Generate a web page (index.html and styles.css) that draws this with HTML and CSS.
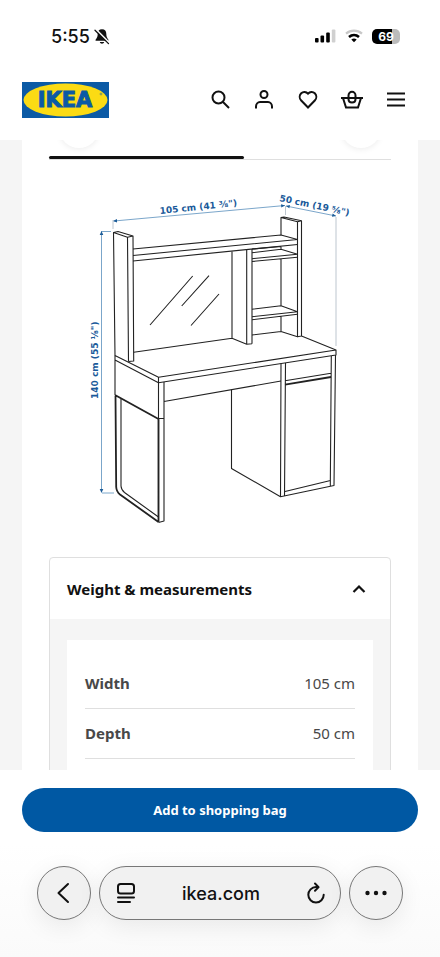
FILE: index.html
```html
<!DOCTYPE html>
<html lang="en">
<head>
    <meta charset="UTF-8">
    <meta name="viewport" content="width=device-width, initial-scale=1.0">
    <title>Desk - IKEA</title>
    <link rel="stylesheet" href="styles.css">
</head>
<body>
    <div class="status-bar">
        <div class="status-time">
            <span>5:55</span>
            <svg width="16" height="17" viewBox="0 0 16 17">
                <path d="M8 1.2c-3 0-4.3 2.100-4.300 4.600 0 3.400-1 4.300-2 5.600-.4.6-.2 1.400.6 1.400h11.400c.8 0 1-.8.6-1.400-1-1.300-2-2.200-2-5.600 0-2.500-1.300-4.600-4.300-4.600z" fill="#111"/>
                <path d="M5.800 14h4.400c-.3 1.100-1.100 1.700-2.200 1.700s-1.900-.6-2.200-1.700z" fill="#111"/>
                <path d="M2 1.400l13.500 13.500" stroke="#fff" stroke-width="1.500"/>
                <path d="M1 2.200l13.500 13.400" stroke="#111" stroke-width="1.300" stroke-linecap="round"/>
            </svg>
        </div>
        <div class="status-icons">
            <svg width="22" height="14" viewBox="0 0 22 14">
                <rect x="1" y="9" width="3.600" height="4.500" rx="1" fill="#000"/>
                <rect x="6.500" y="6.500" width="3.600" height="7" rx="1" fill="#000"/>
                <rect x="12.200" y="3.500" width="3.600" height="10" rx="1" fill="#000"/>
                <rect x="17.800" y="0.500" width="3.600" height="13" rx="1" fill="#d0d0d0"/>
            </svg>
            <svg width="18" height="14" viewBox="0 0 18 14" fill="none">
                <path d="M1 4.600c4.600-4 11.400-4 16 0" stroke="#c8c8c8" stroke-width="2.200"/>
                <path d="M4 8c3-2.600 7-2.600 10 0" stroke="#000" stroke-width="2.600"/>
                <path d="M9 13.200l-2.700-2.800c1.600-1.300 3.800-1.300 5.400 0z" fill="#000"/>
            </svg>
            <div class="battery"><span>69</span></div>
        </div>
    </div>

    <header class="site-header">
        <a class="logo" href="#" aria-label="IKEA">
            <svg width="87" height="36" viewBox="0 0 87 36">
                <rect width="87" height="36" fill="#0b5aa5"/>
                <ellipse cx="43.500" cy="18" rx="42" ry="16.500" fill="#fbdb14"/>
                <text class="logo-text" x="43" y="25" text-anchor="middle">IKEA</text>
                <circle cx="79" cy="12" r="1" fill="none" stroke="#0b5aa5" stroke-width=".5"/>
            </svg>
        </a>
        <nav class="header-nav">
            <a href="#" aria-label="Search">
                <svg width="24" height="24" viewBox="0 0 24 24">
                    <circle cx="10.500" cy="9.500" r="6"/>
                    <path d="M15 14l6 6"/>
                </svg>
            </a>
            <a href="#" aria-label="Account">
                <svg width="24" height="24" viewBox="0 0 24 24">
                    <circle cx="12" cy="6.500" r="3.500"/>
                    <path d="M4 20.500v-2c0-2.500 1.800-4.500 4-4.500h8c2.200 0 4 2 4 4.500v2"/>
                </svg>
            </a>
            <a href="#" aria-label="Favourites">
                <svg width="24" height="24" viewBox="0 0 24 24">
                    <path d="M12 19.500l-6.800-7c-2-2.100-2-5.300 0-7.300 2-1.900 4.900-1.700 6.800.5 1.900-2.200 4.800-2.400 6.800-.5 2 2 2 5.200 0 7.300z"/>
                </svg>
            </a>
            <a href="#" aria-label="Shopping bag">
                <svg width="24" height="24" viewBox="0 0 24 24">
                    <path d="M1 10h22M3 10l3 9.500h12l3-9.500"/>
                    <path d="M8.500 11V7.500c0-2 1.500-3.700 3.500-3.700s3.500 1.700 3.500 3.700V11c0 2-1.500 3.500-3.500 3.500S8.500 13 8.500 11z"/>
                </svg>
            </a>
            <a href="#" aria-label="Menu">
                <svg width="24" height="24" viewBox="0 0 24 24">
                    <path d="M3 5.500h18M3 11.500h18M3 17.500h18"/>
                </svg>
            </a>
        </nav>
    </header>

    <main class="page">
        <div class="content">
            <div class="carousel-nav">
                <button class="carousel-btn" aria-label="Previous"></button>
                <button class="carousel-btn" aria-label="Next"></button>
            </div>
            <div class="scrollbar"><div class="scrollbar-thumb"></div></div>

            <svg class="drawing" viewBox="49 180 342 360">
                <!-- dimension lines -->
                <g class="dim-line">
                    <path d="M114 221L285 205.500M286 206L336 216"/>
                    <path d="M101.500 232V492M101 231.500H111M102 493H114"/>
                    <path class="dim-light" d="M113 220V229M285.500 206V215M336 217V346"/>
                </g>
                <g class="dim-arrow">
                    <path d="M113 221l4-2v3.500zM285 205.500l-4-1.200.3 3.300zM286 206l3.300 2.300.7-3.200zM336 216l-3.300-2.400-.8 3.200z"/>
                    <path d="M101.500 231l-1.800 4h3.600zM101.500 493l-1.800-4h3.600z"/>
                </g>
                <g class="dim-text">
                    <text transform="translate(160 214) rotate(-6)">105 cm (41 ⅜")</text>
                    <text transform="translate(279 201) rotate(12)">50 cm (19 ⅝")</text>
                    <text transform="translate(98 399) rotate(-90)">140 cm (55 ⅛")</text>
                </g>
                <g class="desk">
                    <!-- left post -->
                    <path d="M113.500 232.500L118 231.500L133 236L127.500 237.300ZM113.500 232.500L115 355.500M127.500 237.300L128.500 361.500M133 236L133.700 361L128.500 361.500"/>
                    <!-- top shelf and mirror -->
                    <path d="M133 249L281 235L297.500 239.500L133 255.500M133 261L297.500 244.500"/>
                    <path d="M133.700 352.300L232 338.300V251.500M232 338.300L246.700 344.300L252 343.700M246.700 249.500V344.300M252 249V343.700"/>
                    <path d="M150 325L192.700 276M181.700 306L209 275.700M191 325.500L219 294"/>
                    <!-- right post and small shelves -->
                    <path d="M281 235V217.500L284 217L301.500 220.700L297.500 221.700L281 217.500M297.500 221.700V336.700L301.500 336V220.700"/>
                    <path d="M252 249L281 246.500M252 252.700L281 249.300L297.500 254.300L252 258.700M252 261.500L297.500 257.300M281 246.500V249.300M281 259V305.700"/>
                    <path d="M252 309.300L281 305.700L297.500 311.700L252 316.700M252 319.700L297.500 314.200M281 316.500V331.500M252 335L281 331.500L297.500 336.700"/>
                    <!-- table top -->
                    <path d="M301.500 336L336 350L158.500 377.300L115 355.500V395M115 360L158.500 382.700L336 355V350M158.500 377.300V522"/>
                    <!-- left side and leg -->
                    <path d="M164 382V521L158.500 522.500M158.500 418.500H164M164 401.500L281 381"/>
                    <path class="thick" d="M115 395L158.500 419M115.500 396L116.200 487Q116.400 491.500 120 494.500L158.500 522M158.500 419V522"/>
                    <path d="M121 399V486Q121.300 490 124.500 492.500L158.500 517"/>
                    <!-- cabinet -->
                    <path d="M231.500 389.500V468.500L280.500 496.700L334 485.500L335.500 355M281 363.500L280.500 496.700M285.500 363L284.500 495.500M331.300 356L330.300 486M285 491.500L330.500 480.500M285 380.700L331 373.300"/>
                    <path class="thick" d="M285 384.700L331 377"/>
                </g>
            </svg>

            <section class="accordion">
                <button class="accordion-header" aria-expanded="true">
                    <span>Weight &amp; measurements</span>
                    <svg width="16" height="16" viewBox="0 0 16 16">
                        <path d="M2.500 11L8 5.500l5.500 5.500" fill="none" stroke="#111" stroke-width="2.200"/>
                    </svg>
                </button>
                <div class="accordion-body">
                    <div class="measurements">
                        <table>
                            <tr>
                                <th scope="row">Width</th>
                                <td>105 cm</td>
                            </tr>
                            <tr>
                                <th scope="row">Depth</th>
                                <td>50 cm</td>
                            </tr>
                        </table>
                    </div>
                </div>
            </section>
        </div>
    </main>

    <footer class="bottom">
        <button class="add-button">Add to shopping bag</button>
        <div class="browser-bar">
            <button class="round-btn" aria-label="Back">
                <svg width="24" height="24" viewBox="0 0 24 24">
                    <path d="M16 3L6.500 12l9.500 9"/>
                </svg>
            </button>
            <div class="address-bar">
                <button class="bar-btn" aria-label="Page settings">
                    <svg width="20" height="24" viewBox="0 0 20 24">
                        <rect x="2" y="3" width="16" height="9.500" rx="2.500"/>
                        <path d="M2 16.500h16M2 21h12"/>
                    </svg>
                </button>
                <a class="address" href="#">ikea.com</a>
                <button class="bar-btn" aria-label="Reload">
                    <svg width="20" height="24" viewBox="0 0 20 24">
                        <path d="M12 6.100h-2a7.700 7.700 0 1 0 7.700 7.700"/>
                        <path d="M9 2.500l3.600 3.600L9 9.700"/>
                    </svg>
                </button>
            </div>
            <button class="round-btn" aria-label="More">
                <svg width="24" height="24" viewBox="0 0 24 24">
                    <g fill="#111" stroke="none">
                        <circle cx="3.500" cy="12" r="2.200"/>
                        <circle cx="12" cy="12" r="2.200"/>
                        <circle cx="20.500" cy="12" r="2.200"/>
                    </g>
                </svg>
            </button>
        </div>
    </footer>
</body>
</html>
```
FILE: styles.css
```css
* {
    box-sizing: border-box;
}
body {
    margin: 0;
    height: 100vh;
    display: flex;
    flex-direction: column;
    font-family: "Noto Sans", sans-serif;
    color: #111;
    background: #fff;
}
button {
    font-family: inherit;
    color: inherit;
    border: none;
    background: none;
    padding: 0;
    cursor: pointer;
}
svg {
    display: block;
}

/* status bar */
.status-bar {
    display: flex;
    justify-content: space-between;
    align-items: center;
    height: 72px;
    padding: 0 40px 0 51px;
}
.status-time {
    display: flex;
    align-items: center;
    gap: 4px;
    font: 500 18px Inter, sans-serif;
}
.status-icons {
    display: flex;
    align-items: center;
    gap: 9px;
}
.battery {
    display: flex;
    align-items: center;
    justify-content: center;
    width: 28px;
    height: 15px;
    border-radius: 5px;
    background: linear-gradient(to right, #000 70%, #bbb 70%);
    color: #fff;
    font: 700 12px Inter, sans-serif;
}

/* header */
.site-header {
    display: flex;
    justify-content: space-between;
    align-items: center;
    height: 68px;
    padding: 0 32px 12px 22px;
}
.logo-text {
    font: 700 21px "DejaVu Sans", sans-serif;
    fill: #0b5aa5;
    stroke: #0b5aa5;
    stroke-width: 1px;
}
.header-nav {
    display: flex;
    gap: 20px;
}
.header-nav svg {
    fill: none;
    stroke: #111;
    stroke-width: 2;
}

/* page */
.page {
    flex: 1;
    min-height: 0;
    overflow: hidden;
    padding: 0 22px;
    background: #f5f5f5;
}
.content {
    min-height: 100%;
    padding: 0 27px;
    background: #fff;
}
.carousel-nav {
    display: flex;
    justify-content: space-between;
    margin-top: -32px;
    padding: 0 10px;
}
.carousel-btn {
    width: 40px;
    height: 40px;
    border-radius: 50%;
    background: #fff;
    box-shadow: 0 1px 6px rgba(0, 0, 0, 0.08);
}
.scrollbar {
    height: 4px;
    margin-top: 8px;
    border-bottom: 1px solid #dfdfdf;
}
.scrollbar-thumb {
    width: 57%;
    height: 3px;
    border-radius: 2px;
    background: #111;
}
.drawing {
    width: 100%;
    margin-top: 20px;
}
.desk {
    fill: none;
    stroke: #222;
    stroke-width: 1.1;
    stroke-linejoin: round;
}
.thick {
    stroke-width: 1.8;
}
.dim-line {
    fill: none;
    stroke: #6c9cc4;
    stroke-width: 0.9;
}
.dim-light {
    stroke: #b5c0c9;
}
.dim-arrow {
    fill: #1c5c98;
}
.dim-text {
    font: 700 9px "DejaVu Sans", sans-serif;
    fill: #1a5a9a;
}

/* accordion */
.accordion {
    margin-top: 17px;
    border: 1px solid #dfdfdf;
    border-radius: 4px 4px 0 0;
}
.accordion-header {
    display: flex;
    justify-content: space-between;
    align-items: center;
    width: 100%;
    height: 61px;
    padding: 0 23px 0 17px;
    font-size: 15px;
    font-weight: 700;
}
.accordion-body {
    padding: 21px 17px;
    background: #f5f5f5;
}
.measurements {
    padding: 18px;
    background: #fff;
}
table {
    width: 100%;
    border-collapse: collapse;
    color: #484848;
    font-size: 15px;
}
th, td {
    height: 50px;
    padding: 0;
    border-bottom: 1px solid #dfdfdf;
}
th {
    text-align: left;
}
td {
    text-align: right;
}

/* bottom bars */
.bottom {
    padding: 18px 22px 37px;
    background: linear-gradient(#fff 40%, #fafafa);
}
.add-button {
    width: 100%;
    height: 44px;
    border-radius: 22px;
    background: #0058a3;
    color: #fff;
    font-size: 13px;
    font-weight: 700;
}
.browser-bar {
    display: flex;
    gap: 8px;
    margin-top: 34px;
    padding: 0 15px;
}
.browser-bar svg {
    fill: none;
    stroke: #111;
    stroke-width: 2;
    stroke-linecap: round;
    stroke-linejoin: round;
}
.round-btn, .address-bar {
    display: flex;
    align-items: center;
    justify-content: center;
    height: 54px;
    border: 1px solid #777;
    border-radius: 27px;
    background: #f1f1f1;
    box-shadow: 0 6px 24px rgba(0, 0, 0, 0.08);
}
.round-btn {
    flex: none;
    width: 54px;
}
.address-bar {
    flex: 1;
    justify-content: space-between;
    padding: 0 14px 0 16px;
}
.address {
    color: #111;
    text-decoration: none;
    font: 500 18px Inter, sans-serif;
}
```
